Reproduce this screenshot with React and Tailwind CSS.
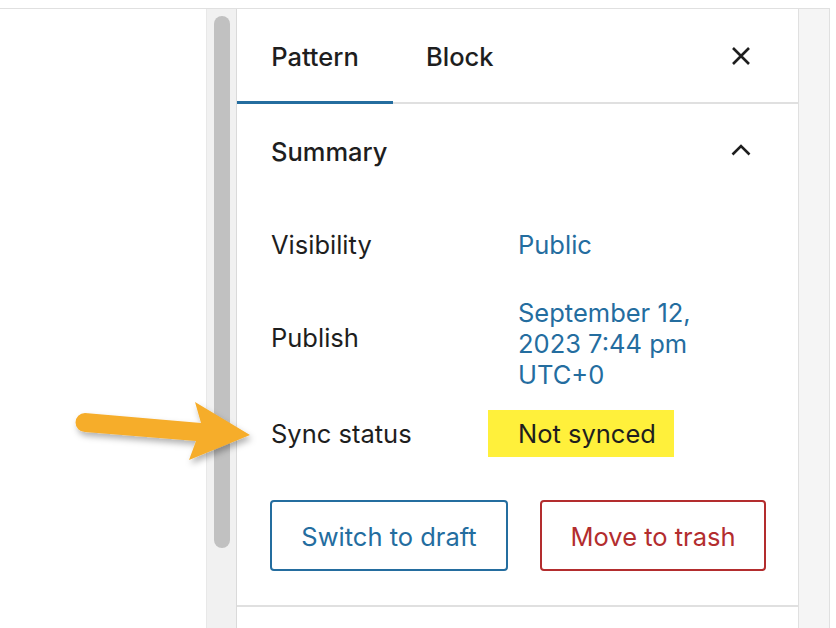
import React from 'react';

// Orange callout arrow pointing at the sync status row
const CalloutArrow = () => (
    <svg
        className="absolute left-[70px] top-[390px]"
        width="200"
        height="84"
        viewBox="0 0 200 84"
    >
        <defs>
            <filter id="arrowShadow" x="-20%" y="-30%" width="140%" height="170%">
                <feDropShadow dx="2" dy="4" stdDeviation="3" floodColor="#000" floodOpacity="0.3" />
            </filter>
        </defs>
        <path
            d="M15 23 L131 33 L125 12 L180 45 L119 70 L126 51 L15 42 A9.5 9.5 0 0 1 15 23 Z"
            fill="#f6ad2c"
            filter="url(#arrowShadow)"
        />
    </svg>
);

const CloseIcon = () => (
    <svg width="20" height="20" viewBox="0 0 20 20" fill="none" stroke="#1e1e1e" strokeWidth="2.6">
        <path d="M2 2 L18 18 M18 2 L2 18" />
    </svg>
);

const ChevronUp = () => (
    <svg width="20" height="12" viewBox="0 0 20 12" fill="none" stroke="#1e1e1e" strokeWidth="2.6">
        <path d="M1.5 10.5 L10 2 L18.5 10.5" />
    </svg>
);

const Row = ({ label, children, className = '' }) => (
    <div className={`flex ${className}`}>
        <div className="w-[247px] shrink-0">{label}</div>
        <div className="flex-1">{children}</div>
    </div>
);

const App = () => {
    return (
        <div
            className="relative w-[836px] h-[628px] overflow-hidden bg-white text-[#1e1e1e]"
            style={{ fontFamily: 'Inter, "Noto Sans", sans-serif' }}
        >
            <div className="mt-[8px] flex w-[830px] h-[620px] border-t border-r border-[#e0e0e0]">
                {/* Canvas area */}
                <div className="w-[206px] shrink-0 bg-white" />

                {/* Scrollbar */}
                <div className="w-[31px] shrink-0 bg-[#f1f1f1] border-l border-r border-l-[#e8e8e8] border-r-[#dadada] pl-[7px] pt-[7px]">
                    <div className="w-[16px] h-[532px] rounded-full bg-[#c1c1c1]" />
                </div>

                {/* Sidebar panel */}
                <div className="w-[562px] shrink-0 bg-white border-r border-[#e0e0e0] flex flex-col">
                    {/* Tabs */}
                    <div className="mt-[1px] h-[94px] flex items-stretch shadow-[inset_0_-2px_0_#e0e0e0]">
                        <button className="w-[156px] text-[25.5px] font-medium shadow-[inset_0_-3px_0_#246d9f]">
                            Pattern
                        </button>
                        <button className="px-[33px] text-[25.5px] font-medium">
                            Block
                        </button>
                        <div className="flex-1" />
                        <button className="w-[114px] flex items-center justify-center pb-[2px]">
                            <CloseIcon />
                        </button>
                    </div>

                    {/* Summary panel */}
                    <div className="border-b-2 border-[#e0e0e0] pl-[34px] pb-[34px]">
                        <div className="h-[96px] flex items-center justify-between">
                            <span className="text-[25.5px] font-medium">Summary</span>
                            <span className="w-[114px] flex justify-center -mt-[5px]">
                                <ChevronUp />
                            </span>
                        </div>

                        <div className="pt-[30px] text-[25.5px] leading-[30px]">
                            <Row label="Visibility">
                                <span className="text-[#246d9f]">Public</span>
                            </Row>

                            <Row
                                className="mt-[37px]"
                                label={<div className="pt-[26px]">Publish</div>}
                            >
                                <div className="text-[#246d9f] leading-[31px]">
                                    September 12,
                                    <br />
                                    2023 7:44 pm
                                    <br />
                                    UTC+0
                                </div>
                            </Row>

                            <div className="mt-[20px] flex items-center">
                                <div className="w-[217px] shrink-0">Sync status</div>
                                <div className="h-[47px] w-[186px] flex items-center pl-[30px] bg-[#fff03b]">
                                    Not synced
                                </div>
                            </div>

                            <div className="mt-[43px] flex gap-[32px] -ml-[1px]">
                                <button className="w-[238px] h-[71px] pt-[2px] rounded-[4px] border-2 border-[#246d9f] text-[#246d9f]">
                                    Switch to draft
                                </button>
                                <button className="w-[226px] h-[71px] pt-[2px] rounded-[4px] border-2 border-[#b32d2e] text-[#b32d2e]">
                                    Move to trash
                                </button>
                            </div>
                        </div>
                    </div>
                </div>

                {/* Right gutter */}
                <div className="w-[30px] shrink-0 bg-[#f5f5f5]" />
            </div>

            <CalloutArrow />
        </div>
    );
};

export default App;
